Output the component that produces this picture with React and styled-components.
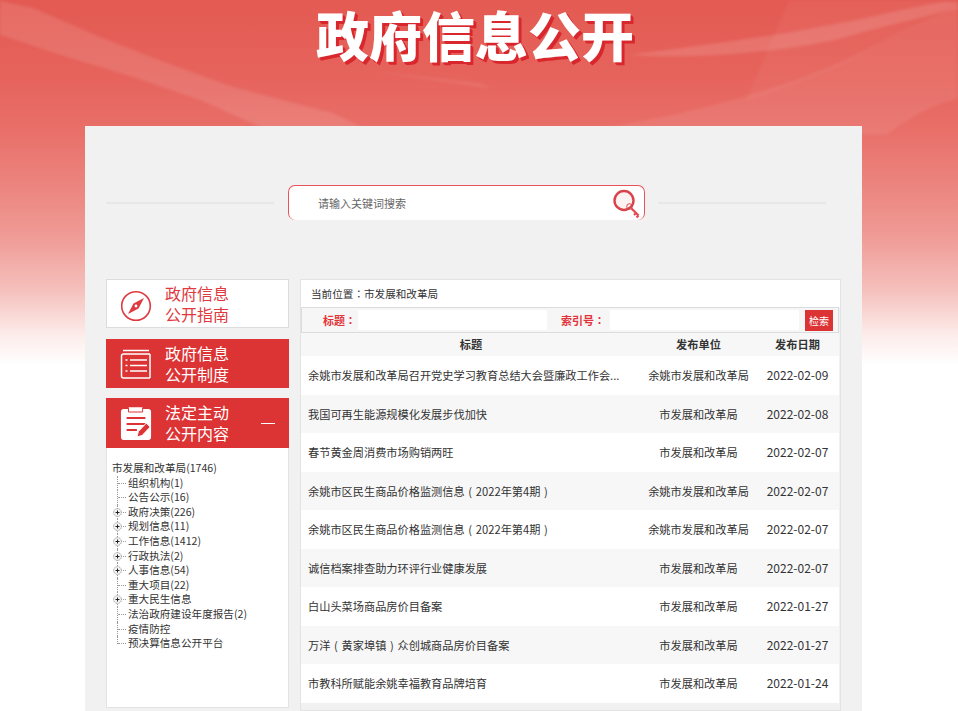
import styled, { createGlobalStyle } from "styled-components";

const cjk = `"Noto Sans CJK SC", "Noto Sans", sans-serif`;

const GlobalStyle = createGlobalStyle`
  html, body {
    margin: 0;
    padding: 0;
    background: #fff;
    font-family: ${cjk};
  }
`;

const Page = styled.div`
  position: relative;
  height: 711px;
  overflow: hidden;
  background: linear-gradient(
    180deg,
    #e35a52 0,
    #e6645d 80px,
    #e96f69 130px,
    #ec8680 190px,
    #f09d98 240px,
    #f5c0bc 290px,
    #fcecea 335px,
    #fff 365px
  );
`;
const Swirls = styled.svg`
  position: absolute;
  left: 0;
  top: 0;
  filter: blur(1.5px);
`;
const Banner = styled.h1`
  position: relative;
  margin: 0;
  height: 126px;
  padding-right: 8px;
  text-align: center;
  font-size: 53px;
  line-height: 68px;
  font-weight: 800;
  color: #fff;
  text-shadow: 2px 2px 0 #d9272e, 3px 3px 0 #d9272e;
`;
const Panel = styled.main`
  position: relative;
  width: 777px;
  height: 585px;
  margin-left: 85px;
  background: #f1f1f1;
`;
const SearchRow = styled.div`
  display: flex;
  align-items: center;
  height: 153px;
  padding: 0 36px 0 21px;
  gap: 13px;
`;
const Rule = styled.div`
  flex: 1;
  height: 2px;
  background: #e7e7e7;
`;
const SearchBox = styled.div`
  display: flex;
  justify-content: space-between;
  align-items: center;
  box-sizing: border-box;
  width: 357px;
  height: 35px;
  margin-left: 1px;
  padding: 0 1px 0 29px;
  border: 1px solid #e8525a;
  border-bottom: none;
  border-radius: 7px;
  background: #fff;
  font-size: 11px;
  color: #666;
`;
const Columns = styled.div`
  display: flex;
  gap: 11px;
  padding-left: 21px;
`;
const Side = styled.aside`
  width: 183px;
`;
const GuideCard = styled.div`
  display: flex;
  align-items: center;
  box-sizing: border-box;
  height: ${(p) => p.$h}px;
  margin-bottom: ${(p) => p.$mb}px;
  padding-left: 14px;
  border: ${(p) => (p.$solid ? "none" : "1px solid #dcdcdc")};
  background: ${(p) => (p.$solid ? "#dc3335" : "#fff")};
  color: ${(p) => (p.$solid ? "#fff" : "#de3a3f")};
  font-size: 16px;
  line-height: 21px;
`;
const CardLabel = styled.div`
  margin-left: ${(p) => (p.$solid ? 13 : 12)}px;
  flex: 1;
`;
const Dash = styled.span`
  width: 14px;
  height: 1px;
  margin-right: 14px;
  background: #fff;
`;
const TreeBox = styled.div`
  box-sizing: border-box;
  height: 260px;
  padding: 13px 0 0 5px;
  border: 1px solid #e3e3e3;
  border-top: none;
  background: #fff;
  font-size: 10.6px;
  line-height: 14.6px;
  color: #333;
`;
const TreeRoot = styled.div`
  white-space: nowrap;
`;
const TreeItem = styled.div`
  position: relative;
  padding-left: 16px;
  white-space: nowrap;
  &::before {
    content: "";
    position: absolute;
    left: 5px;
    top: 0;
    height: ${(p) => (p.$last ? "8px" : "100%")};
    border-left: 1px dotted #999;
  }
  &::after {
    content: "";
    position: absolute;
    left: 6px;
    top: 7px;
    width: 8px;
    border-top: 1px dotted #999;
  }
`;
const PlusIcon = styled.svg`
  position: absolute;
  left: 1px;
  top: 3px;
  z-index: 1;
`;
const Content = styled.section`
  box-sizing: border-box;
  width: 541px;
  height: 432px;
  border: 1px solid #e3e3e3;
  background: #f1f1f1;
`;
const Crumb = styled.div`
  height: 27px;
  padding-left: 10px;
  background: #fff;
  font-size: 10.6px;
  line-height: 27px;
  color: #333;
`;
const Filter = styled.div`
  display: flex;
  align-items: center;
  box-sizing: border-box;
  width: 538px;
  height: 26px;
  border: 1px solid #d9dde0;
  background: #f6f6f6;
`;
const FilterLabel = styled.label`
  box-sizing: border-box;
  width: ${(p) => p.$w}px;
  padding-right: ${(p) => p.$pad}px;
  text-align: right;
  font-size: 11px;
  font-weight: 700;
  color: #e2333b;
`;
const FilterInput = styled.div`
  width: 189px;
  height: 20px;
  background: #fff;
`;
const SearchButton = styled.button`
  width: 28px;
  height: 21px;
  margin-left: 6px;
  padding: 0;
  border: none;
  background: #dc3335;
  color: #fff;
  font-family: inherit;
  font-size: 10px;
`;
const Row = styled.div`
  display: grid;
  grid-template-columns: 340px 115px 83px;
  align-items: center;
  box-sizing: border-box;
  width: 538px;
  height: ${(p) => (p.$head ? "23px" : "38.5px")};
  padding-bottom: ${(p) => (p.$head ? "1px" : "0.5px")};
  background: ${(p) => (p.$head || p.$alt ? "#f7f7f7" : "#fff")};
  font-size: 11.2px;
  font-weight: ${(p) => (p.$head ? 700 : 400)};
  color: #333;
`;
const Cell = styled.div`
  text-align: center;
  white-space: nowrap;
`;
const TitleCell = styled.div`
  padding-left: 7px;
  overflow: hidden;
  white-space: nowrap;
  text-overflow: ellipsis;
`;
const DateCell = styled.div`
  padding-bottom: 1px;
  text-align: center;
  font-size: 12px;
`;
// the traditional cut centres a full-width colon in its em box
const Punct = styled.span`
  font-family: "Noto Sans CJK TC", sans-serif;
`;
// brackets sit in the middle of a full em in the reference
const Bracket = styled.span`
  padding: 0 3.7px;
`;

const rows = [
  ["余姚市发展和改革局召开党史学习教育总结大会暨廉政工作会...", "余姚市发展和改革局", "2022-02-09"],
  ["我国可再生能源规模化发展步伐加快", "市发展和改革局", "2022-02-08"],
  ["春节黄金周消费市场购销两旺", "市发展和改革局", "2022-02-07"],
  ["余姚市区民生商品价格监测信息(2022年第4期)", "余姚市发展和改革局", "2022-02-07"],
  ["余姚市区民生商品价格监测信息(2022年第4期)", "余姚市发展和改革局", "2022-02-07"],
  ["诚信档案排查助力环评行业健康发展", "市发展和改革局", "2022-02-07"],
  ["白山头菜场商品房价目备案", "市发展和改革局", "2022-01-27"],
  ["万洋(黄家埠镇)众创城商品房价目备案", "市发展和改革局", "2022-01-27"],
  ["市教科所赋能余姚幸福教育品牌培育", "市发展和改革局", "2022-01-24"],
];

const tree = [
  ["组织机构(1)"],
  ["公告公示(16)"],
  ["政府决策(226)", true],
  ["规划信息(11)", true],
  ["工作信息(1412)", true],
  ["行政执法(2)", true],
  ["人事信息(54)", true],
  ["重大项目(22)"],
  ["重大民生信息", true],
  ["法治政府建设年度报告(2)"],
  ["疫情防控"],
  ["预决算信息公开平台"],
];

function withPunct(text) {
  return text.split(/([()：])/).map((part, i) => {
    if (i % 2 === 0) return part;
    if (part === "：") return <Punct key={i}>{part}</Punct>;
    return <Bracket key={i}>{part}</Bracket>;
  });
}

function Plus() {
  return (
    <PlusIcon width="9" height="9" viewBox="0 0 9 9">
      <circle cx="4.5" cy="4.5" r="3.9" fill="#f4f4f4" stroke="#999" strokeDasharray="1 .6" />
      <path d="M2.500 4.500h4M4.500 2.500v4" stroke="#222" fill="none" />
    </PlusIcon>
  );
}

function KeyIcon() {
  return (
    <svg width="30" height="32" viewBox="0 0 30 32">
      <circle cx="11" cy="13.500" r="9.500" fill="#fdf3f3" stroke="#d8434a" strokeWidth="2.400" />
      <circle cx="16.500" cy="19.500" r="2.800" fill="none" stroke="#d8434a" />
      <path d="M18.500 21.500l7 7M23 26l-2 2M25.500 28.500l-2 2" stroke="#e5484f" strokeWidth="2.200" fill="none" />
    </svg>
  );
}

function CompassIcon() {
  return (
    <svg width="32" height="36" viewBox="0 -4 32 36">
      <circle cx="15" cy="16" r="14.300" fill="none" stroke="#de3a3f" strokeWidth="1.600" />
      <path d="M23 8L17.500 18.500 7 24l5.500-10.500z" fill="#de3a3f" />
      <circle cx="15" cy="16" r="1.400" fill="#fff" />
    </svg>
  );
}

function ListIcon() {
  return (
    <svg width="32" height="32" viewBox="0 0 32 32" fill="none" stroke="#fff">
      <path d="M3 2.500h26" strokeWidth="1.500" />
      <path d="M30 6H3.500A2 2 0 0 0 1.500 8v20a2 2 0 0 0 2 2h26.500" strokeWidth="1.500" />
      <path d="M30 6v24" strokeWidth="1.500" />
      <path d="M10 12h17M10 17.500h17M10 23h17M5.500 12h2M5.500 17.500h2M5.500 23h2" strokeWidth="1.600" />
    </svg>
  );
}

function NoteIcon() {
  return (
    <svg width="32" height="34" viewBox="-1 0 34 34" preserveAspectRatio="none">
      <path d="M3 3h5V1.500h15V3h6a3 3 0 0 1 3 3v25a3 3 0 0 1-3 3H3a3 3 0 0 1-3-3V6a3 3 0 0 1 3-3z" fill="#fff" />
      <path d="M8 1.500V6h15V1.500" fill="#fff" stroke="#dc3335" />
      <path d="M6 12h20M6 18h20M6 24h11" stroke="#dc3335" strokeWidth="2" fill="none" />
      <path d="M17 31l1.500-5.500L27 17l4 4-8.500 8.500z" fill="#dc3335" stroke="#fff" />
    </svg>
  );
}

export default function App() {
  return (
    <>
      <GlobalStyle />
      <Page>
        <Swirls width="958" height="400" viewBox="0 0 958 400">
          <path d="M-5 0L33 8 100 37 167 63 233 87 333 113 367 130H267L200 100 133 77 67 57 -5 33z" fill="#fff" opacity=".11" />
          <path d="M629 55C690 47 790 35 879 15S940 5 960 2V8C910 20 870 30 846 37 800 50 700 60 629 55z" fill="#fff" opacity=".13" />
          <path d="M596 130C650 120 712 107 760 92S860 55 879 43 940 12 960 6V98C930 105 910 118 886 135z" fill="#fff" opacity=".08" />
          <path d="M789 0L746 100C800 85 860 60 879 43 920 20 940 10 960 3V0z" fill="#fff" opacity=".04" />
          <path d="M363 70L479 83 492 88 479 87z" fill="#fff" opacity=".08" />
        </Swirls>
        <Banner>政府信息公开</Banner>
        <Panel>
          <SearchRow>
            <Rule />
            <SearchBox>
              请输入关键词搜索
              <KeyIcon />
            </SearchBox>
            <Rule />
          </SearchRow>
          <Columns>
            <Side>
              <GuideCard $h={49} $mb={11}>
                <CompassIcon />
                <CardLabel>
                  政府信息
                  <br />
                  公开指南
                </CardLabel>
              </GuideCard>
              <GuideCard $solid $h={49} $mb={10}>
                <ListIcon />
                <CardLabel $solid>
                  政府信息
                  <br />
                  公开制度
                </CardLabel>
              </GuideCard>
              <GuideCard $solid $h={50} $mb={0}>
                <NoteIcon />
                <CardLabel $solid>
                  法定主动
                  <br />
                  公开内容
                </CardLabel>
                <Dash />
              </GuideCard>
              <TreeBox>
                <TreeRoot>市发展和改革局(1746)</TreeRoot>
                {tree.map(([label, more], i) => (
                  <TreeItem key={label} $last={i === tree.length - 1}>
                    {more && <Plus />}
                    {label}
                  </TreeItem>
                ))}
              </TreeBox>
            </Side>
            <Content>
              <Crumb>{withPunct("当前位置：市发展和改革局")}</Crumb>
              <Filter>
                <FilterLabel $w={56} $pad={2}>{withPunct("标题：")}</FilterLabel>
                <FilterInput />
                <FilterLabel $w={63} $pad={5}>{withPunct("索引号：")}</FilterLabel>
                <FilterInput />
                <SearchButton>检索</SearchButton>
              </Filter>
              <Row $head>
                <Cell>标题</Cell>
                <Cell>发布单位</Cell>
                <Cell>发布日期</Cell>
              </Row>
              {rows.map((row, i) => (
                <Row key={i} $alt={i % 2 === 1}>
                  <TitleCell>{withPunct(row[0])}</TitleCell>
                  <Cell>{row[1]}</Cell>
                  <DateCell>{row[2]}</DateCell>
                </Row>
              ))}
            </Content>
          </Columns>
        </Panel>
      </Page>
    </>
  );
}
